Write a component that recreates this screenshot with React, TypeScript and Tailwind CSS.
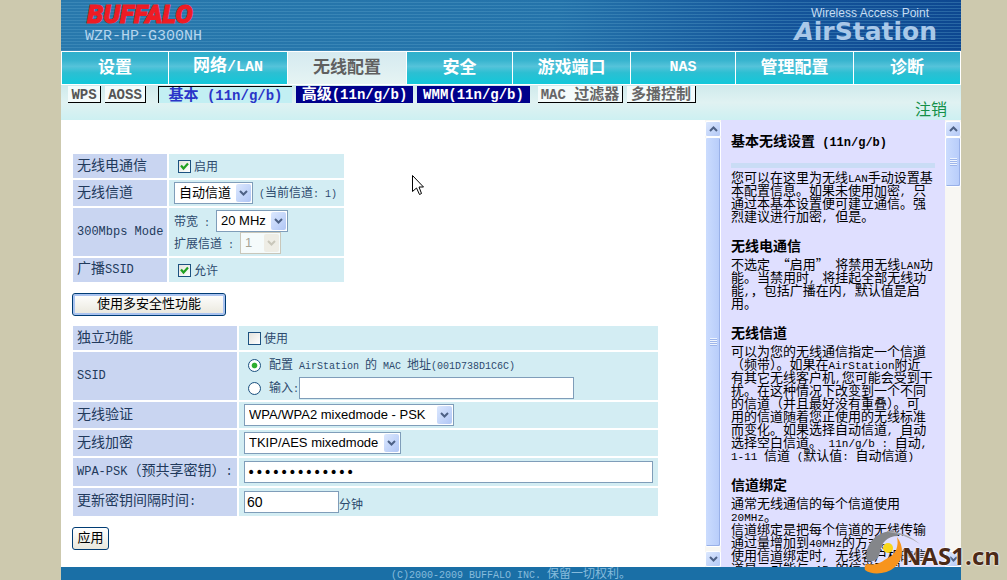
import { useState } from "react";
import type { ReactNode } from "react";
import clsx from "clsx";

interface MixedProps {
  children: string;
  latin: string;
}

// Latin runs are set in a monospace face at roughly half the CJK width
function Mixed({ children, latin }: MixedProps) {
  return (
    <>
      {children.split(/([\x20-\x7e]+)/).map((part, i) =>
        i % 2 ? (
          <span key={i} className={clsx("whitespace-pre", latin)}>
            {part}
          </span>
        ) : (
          part
        ),
      )}
    </>
  );
}

const LATIN_XS = "font-['Liberation_Mono'] text-[10px]";
const LATIN_SM = "font-['Liberation_Mono'] text-[11px]";
const LATIN_MD = "font-['Liberation_Mono'] text-[12px]";
const LATIN_LG = "font-['Liberation_Mono'] text-[14px]";
const LATIN_XL = "font-['Liberation_Mono'] text-[15px]";

const NAV = ["设置", "网络/LAN", "无线配置", "安全", "游戏端口", "NAS", "管理配置", "诊断"];

const SUB_TABS = [
  { label: "WPS", style: "w-[33px] border-r border-b border-black bg-[#f4fbfb] text-[#555]" },
  { label: "AOSS", style: "ml-1 w-[41px] border-r border-b border-black bg-[#f4fbfb] text-[#555]" },
  { label: "基本 (11n/g/b)", style: "ml-3 w-[134px] border-t border-l border-black bg-[#c2eff3] text-[#2a35c8]" },
  { label: "高级(11n/g/b)", style: "ml-1 w-[117px] bg-[#00008b] text-white" },
  { label: "WMM(11n/g/b)", style: "ml-1 w-[113px] bg-[#00008b] text-white" },
  { label: "MAC 过滤器", style: "ml-2 w-[85px] border-r border-b border-black bg-[#f4fbfb] text-[#666]" },
  { label: "多播控制", style: "ml-1 w-[69px] border-r border-b border-black bg-[#f4fbfb] text-[#666]" },
];

const HELP = [
  {
    title: "无线电通信",
    lines: ["不选定 “启用” 将禁用无线LAN功", "能。当禁用时, 将挂起全部无线功", "能,，包括广播在内, 默认值是启", "用。"],
  },
  {
    title: "无线信道",
    lines: [
      "可以为您的无线通信指定一个信道",
      "（频带）。如果在AirStation附近",
      "有其它无线客户机,您可能会受到干",
      "扰。在这种情况下改变到一个不同",
      "的信道（并且最好没有重叠）。可",
      "用的信道随着您正使用的无线标准",
      "而变化。如果选择自动信道, 自动",
      "选择空白信道。 11n/g/b : 自动,",
      "1-11 信道 (默认值: 自动信道)",
    ],
  },
  {
    title: "信道绑定",
    lines: [
      "通常无线通信的每个信道使用",
      "20MHz。",
      "信道绑定是把每个信道的无线传输",
      "通过量增加到40MHz的方式。",
      "使用信道绑定时, 无线客户机的信",
      "道显示可能与 AP 的信道不同。",
    ],
  },
];

function HelpLines({ lines }: { lines: string[] }) {
  return (
    <p className="text-[13px] leading-[13px]">
      {lines.map((line) => (
        <span key={line} className="block h-[13px] whitespace-nowrap">
          <Mixed latin={LATIN_SM}>{line}</Mixed>
        </span>
      ))}
    </p>
  );
}

function Chevron({ up, className }: { up?: boolean; className?: string }) {
  return (
    <svg viewBox="0 0 9 6" className={clsx("h-[6px] w-[9px]", className)} fill="none" stroke="currentColor" strokeWidth="2">
      <path d={up ? "M1 5L4.500 1.500L8 5" : "M1 1L4.500 4.500L8 1"} />
    </svg>
  );
}

function ScrollBar({ thumb }: { thumb: string }) {
  const arrow =
    "flex h-4 w-full shrink-0 items-center justify-center rounded-xs border border-white bg-linear-to-br from-[#dce8fe] to-[#b4c9f6] text-[#4d6185]";
  return (
    <div className="flex w-4 shrink-0 flex-col bg-[#f8f7f3] pt-px">
      <button aria-label="向上" className={arrow}>
        <Chevron up />
      </button>
      <div className="min-h-0 flex-1">
        <div
          className={clsx(
            "flex w-full items-center justify-center rounded-xs border border-white bg-linear-to-r from-[#cbdcfe] to-[#b7ccfa] shadow-[inset_-1px_-1px_0_#98b0e8]",
            thumb,
          )}
        >
          <span className="h-[8px] w-[7px] bg-[repeating-linear-gradient(#eef4fe_0_1px,#9db5ea_1px_2px)]" />
        </div>
      </div>
      <button aria-label="向下" className={arrow}>
        <Chevron />
      </button>
    </div>
  );
}

interface SelectProps {
  id: string;
  options: string[];
  width: string;
  label: string;
  disabled?: boolean;
}

function Select({ id, options, width, label, disabled }: SelectProps) {
  return (
    <span className={clsx("relative inline-block h-[22px] shrink-0 align-middle", width)}>
      <select
        id={id}
        aria-label={label}
        disabled={disabled}
        className={clsx(
          "h-full w-full appearance-none border pl-1 font-['Liberation_Sans','Noto_Sans_CJK_SC',sans-serif] text-[13px] leading-5",
          disabled ? "border-[#c9c7ba] bg-[#f5fbfb] text-[#a5a495] opacity-100" : "border-[#7f9db9] bg-white text-black",
        )}
      >
        {options.map((o) => (
          <option key={o}>{o}</option>
        ))}
      </select>
      <span
        className={clsx(
          "pointer-events-none absolute top-[2px] right-[2px] flex h-[18px] w-[15px] items-center justify-center rounded-xs",
          disabled ? "bg-[#eeede5] text-[#c9c7ba]" : "bg-linear-to-br from-[#dce8fe] to-[#b0c6f5] text-[#4d6185]",
        )}
      >
        <Chevron />
      </span>
    </span>
  );
}

function CheckBox({ label, defaultChecked }: { label: string; defaultChecked?: boolean }) {
  const [checked, setChecked] = useState(!!defaultChecked);
  return (
    <label className="flex items-center gap-[3px] pl-1">
      <span className="relative h-[13px] w-[13px]">
        <input
          type="checkbox"
          checked={checked}
          onChange={(e) => setChecked(e.target.checked)}
          className="block h-[13px] w-[13px] appearance-none border border-[#1c5180] bg-linear-to-br from-[#e4e3dc] to-white"
        />
        {checked && (
          <svg viewBox="0 0 13 13" className="pointer-events-none absolute inset-0" fill="none" stroke="#21a121" strokeWidth="2.200">
            <path d="M3 5.500L5.500 8.500L10 3.500" />
          </svg>
        )}
      </span>
      <span className="leading-4">{label}</span>
    </label>
  );
}

interface RadioProps {
  id: string;
  checked: boolean;
  onChange: () => void;
}

function Radio({ id, checked, onChange }: RadioProps) {
  return (
    <input
      id={id}
      type="radio"
      name="ssid"
      checked={checked}
      onChange={onChange}
      className="h-[13px] w-[13px] shrink-0 appearance-none rounded-full border border-[#1c5180] bg-[radial-gradient(circle,white_60%,#dcdcd4)] checked:bg-[radial-gradient(circle,#2fae2f_30%,white_42%)]"
    />
  );
}

interface RowProps {
  label: string;
  height: string;
  htmlFor?: string;
  children: ReactNode;
}

function Row({ label, height, htmlFor, children }: RowProps) {
  return (
    <tr className={height}>
      <th scope="row" className="bg-[#c9d5f1] px-1 pb-1 text-left align-middle text-[14px] leading-4 font-normal whitespace-nowrap">
        <label htmlFor={htmlFor}>
          <Mixed latin={LATIN_MD}>{label}</Mixed>
        </label>
      </th>
      <td className="bg-[#d3edf3] px-[5px] align-middle text-[12px] leading-4 whitespace-nowrap text-[#2d4a6e]">{children}</td>
    </tr>
  );
}

function Header() {
  return (
    <header className="flex h-[51px] shrink-0 justify-between bg-[repeating-linear-gradient(transparent_0_2px,#5ea5cc55_2px_3px),linear-gradient(100deg,#2878ac_0%,#2473aa_55%,#14549a_80%,#0d4790_100%)] pr-6 pl-6">
      <div className="pt-px">
        <div className="pl-[2px] font-['Roboto',sans-serif] text-[26px] leading-[26px] font-black text-[#ee1c24] italic [-webkit-text-stroke:1px_#ee1c24]">
          BUFFALO
        </div>
        <div className="font-['Liberation_Mono',monospace] text-[15px] leading-5 text-[#b5d5ee]">WZR-HP-G300NH</div>
      </div>
      <div className="pt-[6px] text-right font-['Liberation_Sans',sans-serif] text-[#a9c8e8]">
        <div className="pr-2 text-[12px] leading-[14px] text-[#c5dcf2]">Wireless Access Point</div>
        <div className="font-['DejaVu_Sans',sans-serif] text-[25px] leading-6 font-bold">
          <span className="italic">A</span>irStation
        </div>
      </div>
    </header>
  );
}

function NavBar() {
  return (
    <nav className="grid h-[34px] shrink-0 grid-cols-[107fr_119fr_119fr_106fr_118fr_105fr_118fr_107fr] border-y border-l border-white bg-white">
      {NAV.map((item) => (
        <a
          key={item}
          href="#"
          className={clsx(
            "flex items-center justify-center border-r border-white pb-1 text-[17px] leading-6 font-bold",
            item === "无线配置"
              ? "bg-linear-to-b from-[#d5eaf0] to-[#e6f4f3] text-[#606060]"
              : "bg-[linear-gradient(#2fb0cc_0%,#36b3ce_25%,#55c3da_45%,#2cbfd2_65%,#12c8da_100%)] text-white",
          )}
        >
          <span>
            <Mixed latin={LATIN_XL}>{item}</Mixed>
          </span>
        </a>
      ))}
    </nav>
  );
}

function SubBar() {
  return (
    <div className="relative flex h-[35px] shrink-0 items-start bg-linear-to-b from-[#cfeaec] via-[#e0f2f2] to-[#cdf0f2] pt-px pl-[7px]">
      {SUB_TABS.map((tab) => (
        <a
          key={tab.label}
          href="#"
          className={clsx("h-[17px] text-center text-[15px] leading-[13px] font-bold whitespace-nowrap", tab.style)}
        >
          <Mixed latin={LATIN_LG}>{tab.label}</Mixed>
        </a>
      ))}
      <a href="#" className="absolute right-[14px] bottom-0 text-[16px] leading-6 text-[#149048]">
        注销
      </a>
    </div>
  );
}

const BUTTON =
  "block h-[23px] rounded-[3px] border border-[#003c74] bg-linear-to-b from-white to-[#e9e7dc] pb-1 text-center text-[13px] leading-[17px] text-black";
const FIELD = "h-[22px] border border-[#7f9db9] bg-white px-[2px] text-[14px] text-black";

function Settings() {
  const [useMac, setUseMac] = useState(true);

  return (
    <form className="min-w-0 flex-1 overflow-hidden bg-white pt-8 pl-[10px] text-[#223a5c]" onSubmit={(e) => e.preventDefault()}>
      <table className="w-[275px] table-fixed border-separate border-spacing-[2px]">
        <colgroup>
          <col className="w-[94px]" />
          <col />
        </colgroup>
        <tbody>
          <Row label="无线电通信" height="h-[24px]">
            <CheckBox label="启用" defaultChecked />
          </Row>
          <Row label="无线信道" height="h-[26px]" htmlFor="channel">
            <div className="flex items-center gap-[6px]">
              <Select id="channel" label="无线信道" options={["自动信道"]} width="w-[79px]" />
              <span>
                <Mixed latin={LATIN_XS}>(当前信道: 1)</Mixed>
              </span>
            </div>
          </Row>
          <Row label="300Mbps Mode" height="h-[48px]">
            <div className="flex items-end gap-[6px]">
              <span>
                <Mixed latin={LATIN_XS}>带宽 :</Mixed>
              </span>
              <Select id="width" label="带宽" options={["20 MHz", "40 MHz"]} width="w-[72px]" />
            </div>
            <div className="flex items-end gap-[6px]">
              <span>
                <Mixed latin={LATIN_XS}>扩展信道 :</Mixed>
              </span>
              <Select id="ext" label="扩展信道" options={["1"]} width="w-[41px]" disabled />
            </div>
          </Row>
          <Row label="广播SSID" height="h-[24px]">
            <CheckBox label="允许" defaultChecked />
          </Row>
        </tbody>
      </table>

      <button type="button" className={clsx(BUTTON, "mt-[9px] ml-px w-[154px] shadow-[inset_0_0_0_2px_#a9c3f0]")}>
        使用多安全性功能
      </button>

      <table className="mt-2 w-[589px] table-fixed border-separate border-spacing-[2px]">
        <colgroup>
          <col className="w-[164px]" />
          <col />
        </colgroup>
        <tbody>
          <Row label="独立功能" height="h-[24px]">
            <CheckBox label="使用" />
          </Row>
          <Row label="SSID" height="h-[48px]">
            <div className="flex h-6 items-center gap-2 pl-1">
              <Radio id="ssid-mac" checked={useMac} onChange={() => setUseMac(true)} />
              <label htmlFor="ssid-mac">
                <Mixed latin={LATIN_XS}>配置 AirStation 的 MAC 地址(001D738D1C6C)</Mixed>
              </label>
            </div>
            <div className="flex h-[22px] items-center gap-2 pl-1">
              <Radio id="ssid-input" checked={!useMac} onChange={() => setUseMac(false)} />
              <div className="flex items-center">
                <label htmlFor="ssid-input">
                  <Mixed latin={LATIN_XS}>输入:</Mixed>
                </label>
                <input type="text" aria-label="SSID" className={clsx(FIELD, "w-[275px]")} />
              </div>
            </div>
          </Row>
          <Row label="无线验证" height="h-[26px]" htmlFor="auth">
            <Select id="auth" label="无线验证" options={["WPA/WPA2 mixedmode - PSK"]} width="w-[210px]" />
          </Row>
          <Row label="无线加密" height="h-[26px]" htmlFor="crypt">
            <Select id="crypt" label="无线加密" options={["TKIP/AES mixedmode"]} width="w-[157px]" />
          </Row>
          <Row label="WPA-PSK（预共享密钥）:" height="h-[28px]" htmlFor="psk">
            <input
              id="psk"
              type="password"
              defaultValue="1234567890123"
              className={clsx(FIELD, "block w-full font-['DejaVu_Sans',sans-serif]")}
            />
          </Row>
          <Row label="更新密钥间隔时间:" height="h-[28px]" htmlFor="rekey">
            <div className="flex items-center">
              <input id="rekey" type="text" defaultValue="60" className={clsx(FIELD, "w-[95px] font-['Liberation_Sans',sans-serif]")} />
              <span className="pt-1">分钟</span>
            </div>
          </Row>
        </tbody>
      </table>

      <button type="submit" className={clsx(BUTTON, "mt-[9px] ml-px w-[37px]")}>
        应用
      </button>
    </form>
  );
}

function HelpPane() {
  return (
    <aside className="w-[224px] shrink-0 overflow-hidden bg-[#dfdfff] pt-[13px] pr-[10px] pl-[10px] text-black">
      <h2 className="text-[14px] leading-[15px] font-bold">
        <Mixed latin={LATIN_MD}>基本无线设置 (11n/g/b)</Mixed>
      </h2>
      <hr className="mt-3 mb-[2px] h-[5px] border-0 bg-[#c9dcf5]" />
      <HelpLines lines={["您可以在这里为无线LAN手动设置基", "本配置信息。如果未使用加密, 只", "通过本基本设置便可建立通信。强", "烈建议进行加密, 但是。"]} />
      {HELP.map((section) => (
        <section key={section.title} className="pt-4">
          <h3 className="mb-1 text-[14px] leading-[15px] font-bold">{section.title}</h3>
          <HelpLines lines={section.lines} />
        </section>
      ))}
    </aside>
  );
}

function Watermark() {
  return (
    <div className="pointer-events-none absolute right-[7px] bottom-1 flex items-end">
      <svg viewBox="0 0 62 46" className="-mr-6 h-[46px] w-[62px]">
        <path d="M3 31C0 17 9 3 27 1C31 1 33 3 34 6C23 6 17 13 16 22C15 29 10 33 3 31Z" fill="#84868a" />
        <path d="M24 1Q42 2 56 14Q40 4 24 2Z" fill="#a9aab0" />
        <path d="M4 34C14 36 18 31 24 28C32 24 35 16 33 7C40 16 40 29 31 37C22 45 7 45 1 40C0 37 1 34 4 34Z" fill="#f7941d" />
        <circle cx="24" cy="18" r="5" fill="#f9d71c" />
      </svg>
      <span className="font-['Open_Sans',sans-serif] text-[24px] leading-10 font-bold text-[#4c2a18] [text-shadow:0_0_2px_white,0_0_2px_white]">
        NAS1.cn
      </span>
    </div>
  );
}

export default function App() {
  return (
    <div className="relative flex h-screen flex-col overflow-hidden bg-[#cdc9ae] pr-[46px] pl-[61px] font-['Noto_Sans_CJK_SC',sans-serif]">
      <Header />
      <NavBar />
      <SubBar />
      <main className="flex min-h-0 flex-1 bg-white">
        <Settings />
        <ScrollBar thumb="h-[410px]" />
        <HelpPane />
        <ScrollBar thumb="h-[50px]" />
      </main>
      <footer className="h-[13px] shrink-0 bg-[#1a6fa6] text-center text-[12px] leading-3 text-[#86bbdc]">
        <Mixed latin={LATIN_XS}>(C)2000-2009 BUFFALO INC. 保留一切权利。</Mixed>
      </footer>

      {/* mouse pointer */}
      <svg viewBox="0 0 12 21" className="pointer-events-none absolute top-[175px] left-[412px] h-[21px] w-3" fill="white" stroke="black">
        <path d="M.5 .5V16.500L4.500 13L7.500 19.500L9.500 18.500L7 12H11.500Z" />
      </svg>
      <Watermark />
    </div>
  );
}
